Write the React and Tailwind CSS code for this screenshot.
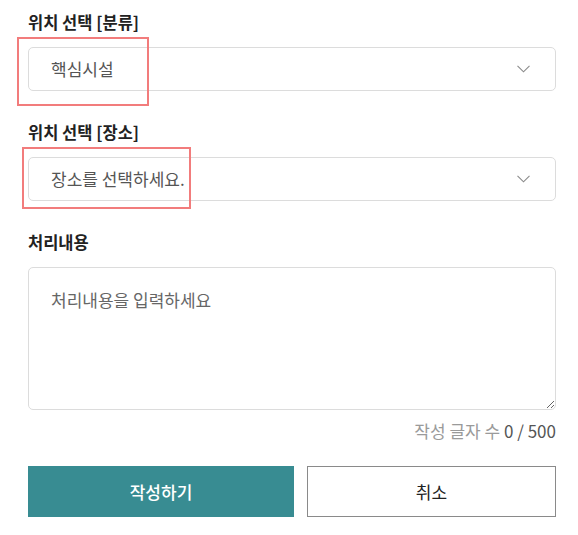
import React, { useState } from 'react';

function Chevron() {
  return (
    <svg width="13" height="8" viewBox="0 0 13 8" fill="none" className="shrink-0">
      <path d="M0.5 0.8 L6.5 6.8 L12.5 0.8" stroke="#8a8a8a" strokeWidth="1.1" />
    </svg>
  );
}

function SelectBox({ value }) {
  return (
    <div className="h-[44px] rounded-[5px] border border-[#dcdcdc] bg-white flex items-center justify-between pl-[22px] pr-[25px] text-[17px] text-[#555]">
      <span>{value}</span>
      <Chevron />
    </div>
  );
}

export default function App() {
  const [text, setText] = useState('');

  return (
    <div
      className="relative w-[578px] h-[535px] bg-white pl-[28px] pr-[22px] pt-[10px] text-[#222]"
      style={{ fontFamily: '"Noto Sans CJK KR", "Noto Sans", sans-serif' }}
    >
      {/* 분류 */}
      <div className="text-[16.5px] leading-[24px] font-bold mb-[13px]">위치 선택 [분류]</div>
      <SelectBox value="핵심시설" />

      {/* 장소 */}
      <div className="text-[16.5px] leading-[24px] font-bold mt-[29px] mb-[13px]">위치 선택 [장소]</div>
      <SelectBox value="장소를 선택하세요." />

      {/* 처리내용 */}
      <div className="text-[16.5px] leading-[24px] font-bold mt-[29px] mb-[13px]">처리내용</div>
      <textarea
        value={text}
        onChange={(e) => setText(e.target.value)}
        placeholder="처리내용을 입력하세요"
        className="block w-full h-[143px] rounded-[5px] border border-[#dcdcdc] px-[22px] pt-[20px] text-[17px] leading-[24px] text-[#555] placeholder:text-[#666] outline-none"
      />
      <div className="mt-[9px] text-right text-[17px] leading-[24px]">
        <span className="text-[#9a9a9a]">작성 글자 수 </span>
        <span className="text-[#555]">{text.length} / 500</span>
      </div>

      {/* buttons */}
      <div className="flex gap-[13px] mt-[23px]">
        <button className="w-[266px] h-[51px] bg-[#388c92] text-white text-[17px] font-medium">작성하기</button>
        <button className="flex-1 h-[51px] bg-white border border-[#8a8a8a] text-[#222] text-[17px]">취소</button>
      </div>

      {/* annotation boxes */}
      <div className="absolute left-[17px] top-[37px] w-[132px] h-[69px] border-2 border-[#f27c7c] pointer-events-none" />
      <div className="absolute left-[22px] top-[147px] w-[169px] h-[62px] border-2 border-[#f27c7c] pointer-events-none" />
    </div>
  );
}
